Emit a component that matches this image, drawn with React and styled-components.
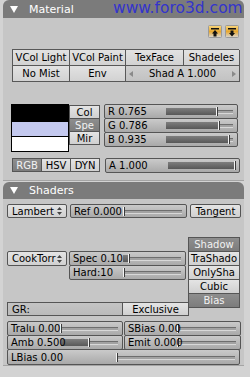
import React from 'react';
import styled, { createGlobalStyle, css } from 'styled-components';

const Global = createGlobalStyle`
  html, body { margin: 0; padding: 0; background: #d3d3d3; }
  body { font-family: "DejaVu Sans", Verdana, sans-serif; font-size: 10px; color: #000; }
  * { box-sizing: border-box; }
`;

const Page = styled.div`
  width: 250px;
  height: 377px;
  overflow: hidden;
  position: relative;
  padding-left: 3px;
  display: flex;
  flex-direction: column;
`;

const Watermark = styled.div`
  position: absolute;
  top: 0;
  left: 113px;
  font-family: "DejaVu Sans", Verdana, sans-serif;
  font-size: 15.5px;
  line-height: 17px;
  color: #3434cc;
  white-space: nowrap;
`;

const Panel = styled.section`
  width: 241px;
  display: flex;
  flex-direction: column;
  margin-top: ${p => p.$top || 0}px;
`;

const Header = styled.div`
  height: ${p => p.$h}px;
  background: #7b7b7b;
  border-radius: 6px 6px 0 0;
  display: flex;
  align-items: center;
  gap: 11px;
  padding-left: 7px;
  color: #fff;
  font-size: 11px;
`;

const Body = styled.div`
  height: ${p => p.$h}px;
  background: #c6c6c6;
  border-bottom: 1px solid #a4a4a4;
  display: flex;
  flex-direction: column;
`;

const IconRow = styled.div`
  display: flex;
  justify-content: flex-end;
  gap: 3px;
  padding: 7px 5px 0 0;
  height: 20px;
`;

const Table = styled.div`
  margin: 11px 0 0 9px;
  display: grid;
  grid-template-columns: 57px 56px 58px 56px;
  grid-auto-rows: 16px;
  width: 227px;
  border-top: 1px solid #585858;
  border-left: 1px solid #585858;
`;

const Cell = styled.div`
  grid-column: span ${p => p.$span || 1};
  border-right: 1px solid #585858;
  border-bottom: 1px solid #585858;
  background: linear-gradient(#e2e2e2, #d2d2d2);
  display: flex;
  align-items: center;
  justify-content: center;
  position: relative;
  white-space: nowrap;
  overflow: hidden;
`;

const NumCell = styled(Cell)`
  background: linear-gradient(#cfcfcf, #c2c2c2);
  justify-content: space-between;
  padding: 0 3px;
`;

const Arrow = ({ dir }) => (
  <svg width="4" height="6" viewBox="0 0 4 6">
    <path d={dir === 'l' ? 'M4 0 L0 3 L4 6 Z' : 'M0 0 L4 3 L0 6 Z'} fill="#8a8a8a" />
  </svg>
);

const ColorSection = styled.div`
  display: flex;
  align-items: flex-start;
  margin-top: 22px;
  padding-left: 8px;
`;

const Swatches = styled.div`
  width: 58px;
  display: flex;
  flex-direction: column;
  border: 1px solid #000;
`;

const Swatch = styled.div`
  height: ${p => p.$h}px;
  background: ${p => p.$c};
  border-top: ${p => (p.$first ? 'none' : '1px solid #000')};
`;

const Stack = styled.div`
  display: flex;
  flex-direction: column;
  width: ${p => p.$w}px;
  margin-left: ${p => p.$ml || 0}px;
  margin-top: ${p => p.$mt || 0}px;
  & > * + * { margin-top: -1px; }
`;

const Btn = styled.div`
  height: ${p => p.$h || 14}px;
  width: ${p => (p.$w ? p.$w + 'px' : 'auto')};
  border: 1px solid #555;
  border-radius: ${p => p.$r || 0}px;
  display: flex;
  align-items: center;
  justify-content: ${p => (p.$left ? 'flex-start' : 'center')};
  padding: ${p => (p.$left ? '0 4px' : '0')};
  white-space: nowrap;
  overflow: hidden;
  flex-shrink: 0;
  background: linear-gradient(#e4e4e4, #d0d0d0);
  color: #000;
  ${p => p.$active && css`
    background: linear-gradient(#8e8e8e, #7c7c7c);
    color: #f2f2f2;
  `}
  ${p => p.$field && css`
    background: linear-gradient(#c4c4c4, #bababa);
  `}
`;

const Row = styled.div`
  display: flex;
  align-items: flex-start;
  margin-top: ${p => p.$mt || 0}px;
  padding-left: ${p => p.$pl || 0}px;
  gap: ${p => p.$gap || 0}px;
  & > .join + .join { margin-left: -1px; }
`;

/* ---------- slider ---------- */
const SliderBox = styled.div`
  position: relative;
  height: ${p => p.$h || 15}px;
  width: ${p => p.$w}px;
  border: 1px solid #555;
  border-radius: 2px;
  background: linear-gradient(#cacaca, #a9a9a9);
  display: grid;
  grid-template-columns: 48% 1fr;
  align-items: center;
  padding-right: 4px;
  flex-shrink: 0;
`;

const SliderLabel = styled.span`
  padding-left: 3px;
  white-space: nowrap;
  position: relative;
  z-index: 1;
`;

const Track = styled.div`
  position: relative;
  height: 9px;
`;

const Rail = styled.div`
  position: absolute;
  left: 0;
  right: 0;
  top: 3px;
  height: 4px;
  border-top: 1px solid #6e6e6e;
  border-bottom: 1px solid #d8d8d8;
  background: #a2a2a2;
`;

const Fill = styled.div`
  position: absolute;
  left: 0;
  top: 1px;
  height: 7px;
  background: linear-gradient(#7e7e7e, #585858);
`;

const Handle = styled.div`
  position: absolute;
  top: 0;
  height: 9px;
  width: 2px;
  border-left: 1px solid #f4f4f4;
  border-right: 1px solid #3a3a3a;
`;

const Slider = ({ label, value, w, h }) => (
  <SliderBox $w={w} $h={h} className="join">
    <SliderLabel>{label}</SliderLabel>
    <Track>
      <Rail />
      <Fill style={{ width: `${value * 100}%` }} />
      <Handle style={{ left: `calc(${value * 100}% - 1px)` }} />
    </Track>
  </SliderBox>
);

/* ---------- icons ---------- */
const PanelIcon = ({ down }) => (
  <svg width="14" height="13" viewBox="0 0 14 13">
    <defs>
      <linearGradient id={down ? 'icd' : 'icu'} x1="0" y1="0" x2="0" y2="1">
        <stop offset="0" stopColor="#f8d880" />
        <stop offset="0.5" stopColor="#e8a830" />
        <stop offset="1" stopColor="#d8d8d8" />
      </linearGradient>
    </defs>
    <rect x="0.5" y="0.5" width="13" height="12" rx="1" fill={`url(#${down ? 'icd' : 'icu'})`} stroke="#9a9a9a" />
    <rect x="3" y="3" width="8" height="1.5" fill="#111" />
    {down ? (
      <path d="M5.5 5.5 H8.5 V8 H10 L7 11.5 L4 8 H5.5 Z" fill="#111" />
    ) : (
      <path d="M7 5 L10 8.5 H8.5 V11.5 H5.5 V8.5 H4 Z" fill="#111" />
    )}
  </svg>
);

const Tri = () => (
  <svg width="8" height="7" viewBox="0 0 8 7">
    <path d="M0 0 H8 L4 7 Z" fill="#fff" />
  </svg>
);

const UpDown = () => (
  <svg width="5" height="8" viewBox="0 0 5 8">
    <path d="M2.5 0 L5 3 H0 Z M0 5 H5 L2.5 8 Z" fill="#444" />
  </svg>
);

const Menu = styled(Btn)`
  justify-content: space-between;
  padding: 0 4px 0 4px;
  border-radius: 2px;
`;

const Split = styled.div`
  display: flex;
  align-items: flex-start;
  margin-top: ${p => p.$mt}px;
  padding-left: 4px;
`;

const LeftCol = styled.div`
  width: 181px;
  height: 79px;
  display: flex;
  flex-direction: column;
  justify-content: space-between;
  padding-top: 14px;
`;

export default function App() {
  return (
    <Page>
      <Global />
      <Panel>
        <Header $h={18}><Tri />Material</Header>
        <Body $h={163}>
          <IconRow>
            <PanelIcon />
            <PanelIcon down />
          </IconRow>
          <Table>
            <Cell>VCol Light</Cell>
            <Cell>VCol Paint</Cell>
            <Cell>TexFace</Cell>
            <Cell>Shadeles</Cell>
            <Cell>No Mist</Cell>
            <Cell>Env</Cell>
            <NumCell $span={2}>
              <Arrow dir="l" />
              <span>Shad A 1.000</span>
              <Arrow dir="r" />
            </NumCell>
          </Table>
          <ColorSection>
            <Swatches>
              <Swatch $first $h={16} $c="#000" />
              <Swatch $h={15} $c="#c4c9ef" />
              <Swatch $h={15} $c="#fff" />
            </Swatches>
            <Stack $w={31} $ml={0} $mt={1}>
              <Btn>Col</Btn>
              <Btn $active>Spe</Btn>
              <Btn>Mir</Btn>
            </Stack>
            <Stack $w={134} $ml={4}>
              <Slider label="R 0.765" value={0.765} w={134} />
              <Slider label="G 0.786" value={0.786} w={134} />
              <Slider label="B 0.935" value={0.935} w={134} />
            </Stack>
          </ColorSection>
          <Row $mt={6} $pl={9}>
            <Btn className="join" $w={30} $active>RGB</Btn>
            <Btn className="join" $w={30}>HSV</Btn>
            <Btn className="join" $w={30}>DYN</Btn>
            <Row $pl={5}>
              <Slider label="A 1.000" value={1} w={135} h={15} />
            </Row>
          </Row>
        </Body>
      </Panel>
      <Panel $top={1}>
        <Header $h={17}><Tri />Shaders</Header>
        <Body $h={167}>
          <Row $mt={5} $pl={4} $gap={3}>
            <Menu $w={60}>Lambert<UpDown /></Menu>
            <Slider label="Ref 0.000" value={0} w={117} h={14} />
            <Btn $w={51} $r={2}>Tangent</Btn>
          </Row>
          <Split $mt={19}>
            <LeftCol>
              <Row $gap={2}>
                <Menu $w={60} $h={15}>CookTorr<UpDown /></Menu>
                <Stack $w={117}>
                  <Slider label="Spec 0.10" value={0.1} w={117} h={15} />
                  <Slider label="Hard:10" value={0.02} w={117} h={15} />
                </Stack>
              </Row>
              <Row>
                <Btn className="join" $w={116} $left $field>GR:</Btn>
                <Btn className="join" $w={67}>Exclusive</Btn>
              </Row>
            </LeftCol>
            <Stack $w={52}>
              <Btn $h={15} $active>Shadow</Btn>
              <Btn $h={15}>TraShado</Btn>
              <Btn $h={15}>OnlySha</Btn>
              <Btn $h={15}>Cubic</Btn>
              <Btn $h={15} $active>Bias</Btn>
            </Stack>
          </Split>
          <Row $mt={5} $pl={4} $gap={1}>
            <Stack $w={116}>
              <Slider label="Tralu 0.00" value={0} w={116} />
              <Slider label="Amb 0.500" value={0.5} w={116} />
            </Stack>
            <Stack $w={117}>
              <Slider label="SBias 0.00" value={0} w={117} />
              <Slider label="Emit 0.000" value={0} w={117} />
            </Stack>
          </Row>
          <Row $mt={-1} $pl={4}>
            <Slider label="LBias 0.00" value={0} w={233} h={16} />
          </Row>
        </Body>
      </Panel>
      <Watermark>www.foro3d.com</Watermark>
    </Page>
  );
}
